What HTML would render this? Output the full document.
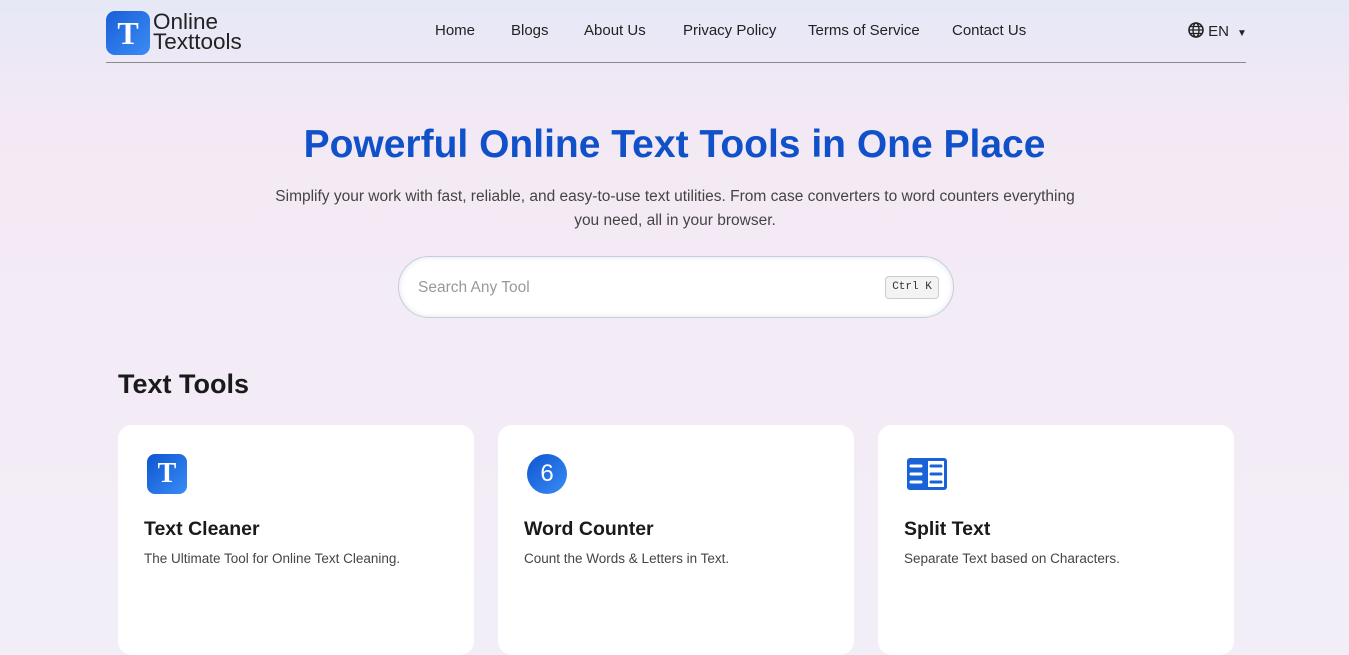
<!DOCTYPE html>
<html style="background:#f2eef7"><head><meta charset="utf-8"><style>
*{margin:0;padding:0;box-sizing:border-box}
body{width:1349px;height:638px;overflow:hidden;font-family:"Liberation Sans",sans-serif;background:linear-gradient(180deg,#e6e8f6 0px,#f3e9f4 120px,#f3ecf6 400px,#f2eef7 638px);position:relative;color:#212529}
.hdr{position:absolute;left:106px;top:0;width:1140px;height:63px;border-bottom:1px solid #8a8a8a}
.logo{position:absolute;left:0;top:11px;width:44px;height:44px;border-radius:9px;background:linear-gradient(135deg,#1a5fd8,#3b8cf5);color:#fff;font:bold 32px "Liberation Serif",serif;text-align:center;line-height:44px}
.lt{position:absolute;left:47px;top:12px;font-size:22.5px;line-height:20px;color:#222}
.nav{position:absolute;top:22px;font-size:15px;color:#222;white-space:nowrap}
h1{position:absolute;left:0;width:1349px;top:123px;text-align:center;font-size:39px;color:#1050c8;font-weight:bold}
.sub{position:absolute;left:205px;width:940px;top:185px;text-align:center;font-size:15.5px;line-height:24px;color:#444}
.search{position:absolute;left:398px;top:256px;width:556px;height:62px;border-radius:31px;background:#fff;border:1px solid #c8cdd8;box-shadow:inset 0 0 6px #dde4ee}
.search span{position:absolute;left:19px;top:22px;font-size:15.5px;color:#999}
.kbd{position:absolute;right:14px;top:19px;width:54px;height:23px;border:1px solid #ccc;border-radius:4px;background:#f3f3f3;font:11px "Liberation Mono",monospace;color:#333;text-align:center;line-height:21px}
h2{position:absolute;left:118px;top:369px;font-size:27px;font-weight:bold;color:#1a1a1a}
.card{position:absolute;top:425px;width:356px;height:230px;background:#fff;border-radius:14px}
.card h3{position:absolute;left:26px;top:93px;font-size:19.5px;color:#1a1a1a}
.card p{position:absolute;left:26px;top:126px;font-size:13.5px;color:#444}
.ic{position:absolute;left:29px;top:29px;width:40px;height:40px}
</style></head><body>
<div class="hdr">
<div class="logo">T</div>
<div class="lt">Online<br>Texttools</div>
<div class="nav" style="left:329px">Home</div>
<div class="nav" style="left:405px">Blogs</div>
<div class="nav" style="left:478px">About Us</div>
<div class="nav" style="left:577px">Privacy Policy</div>
<div class="nav" style="left:702px">Terms of Service</div>
<div class="nav" style="left:846px">Contact Us</div>
<div class="nav" style="left:1082px"><svg width="16" height="16" viewBox="0 0 16 16" style="vertical-align:-2px"><circle cx="8" cy="8" r="7" fill="none" stroke="#222" stroke-width="1.6"/><ellipse cx="8" cy="8" rx="3" ry="7" fill="none" stroke="#222" stroke-width="1.4"/><path d="M1 8h14M2 4.5h12M2 11.5h12" stroke="#222" stroke-width="1.3"/></svg> EN<span style="font-size:10px;margin-left:8px">▼</span></div>
</div>
<h1>Powerful Online Text Tools in One Place</h1>
<div class="sub">Simplify your work with fast, reliable, and easy-to-use text utilities. From case converters to word counters everything<br>you need, all in your browser.</div>
<div class="search"><span>Search Any Tool</span><div class="kbd">Ctrl K</div></div>
<h2>Text Tools</h2>
<div class="card" style="left:118px"><div class="ic" style="border-radius:8px;background:linear-gradient(135deg,#0d55d0,#3a8cf5);color:#fff;font:bold 28px 'Liberation Serif',serif;text-align:center;line-height:40px">T</div><h3>Text Cleaner</h3><p>The Ultimate Tool for Online Text Cleaning.</p></div>
<div class="card" style="left:498px"><div class="ic" style="border-radius:50%;background:linear-gradient(135deg,#0d55d0,#3a8cf5);color:#fff;font:24px 'Liberation Sans',sans-serif;text-align:center;line-height:40px">6</div><h3>Word Counter</h3><p>Count the Words &amp; Letters in Text.</p></div>
<div class="card" style="left:878px"><svg class="ic" viewBox="0 0 40 40"><rect x="0" y="4" width="40" height="32" rx="3" fill="#1a62d8"/><rect x="21" y="7" width="16" height="26" fill="#fff"/><path d="M4 12h10M4 20h10M4 28h10" stroke="#fff" stroke-width="3" stroke-linecap="round"/><path d="M24 12h10M24 20h10M24 28h10" stroke="#1a62d8" stroke-width="3" stroke-linecap="round"/></svg><h3>Split Text</h3><p>Separate Text based on Characters.</p></div>
</body></html>
